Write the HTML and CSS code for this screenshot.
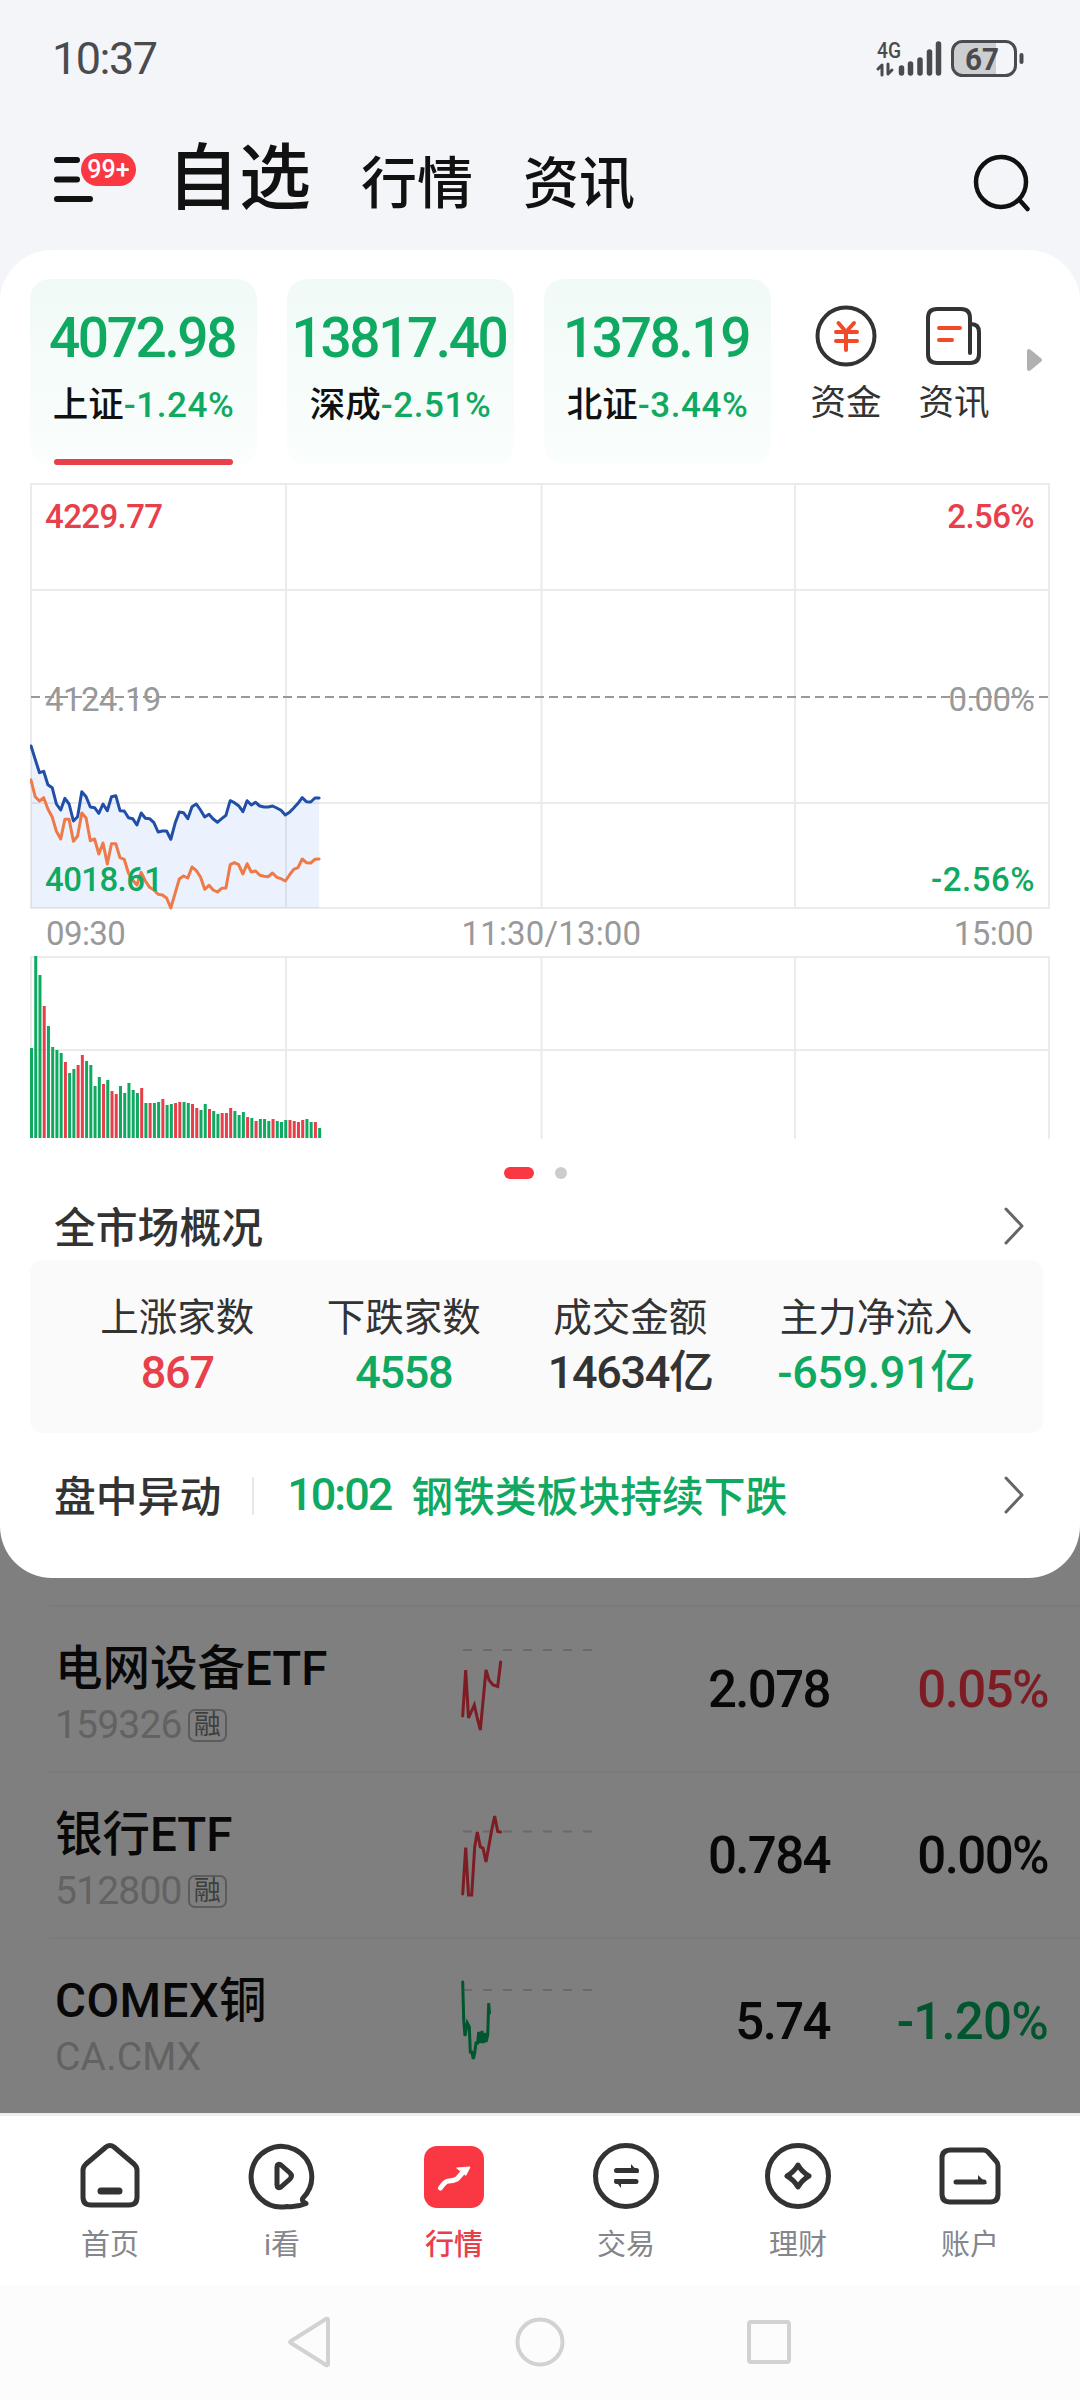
FILE: index.html
```html
<!DOCTYPE html>
<html lang="zh-CN">
<head>
  <meta charset="UTF-8">
  <meta name="viewport" content="width=device-width, initial-scale=1.0">
  <title>自选</title>
  <link rel="stylesheet" href="styles.css">
</head>
<body>

  <div class="status-bar">
    <span class="clock">10:37</span>
    <svg class="status-icons" width="150" height="50" viewBox="875 32 150 50">
      <text class="net-text" x="877" y="56" textLength="24" lengthAdjust="spacingAndGlyphs">4G</text>
      <path class="net-arrows" d="M878 67l4-4v10M892 68l-4 4V62"/>
      <path class="signal" d="M901.500 66v5M910.500 62v9M920 58v13M929.500 50v21M938.500 42v29"/>
      <path class="battery-fill" d="M962 41h34v31h-34q-8 0-8-8V49q0-8 8-8z"/>
      <rect class="battery" x="952.500" y="39.500" width="63" height="34" rx="10"/>
      <path class="battery-tip" d="M1021.500 53v7"/>
      <text class="battery-text" x="965" y="68" textLength="34" lengthAdjust="spacingAndGlyphs">67</text>
    </svg>
  </div>

  <div class="header">
    <div class="menu">
      <svg width="42" height="50" viewBox="0 0 42 50">
        <path d="M4 6h20M4 25.500h20M4 45h33"/>
      </svg>
      <span class="badge">99+</span>
    </div>
    <div class="tabs">
      <span class="tab active">自选</span>
      <span class="tab">行情</span>
      <span class="tab">资讯</span>
    </div>
    <svg class="search" width="60" height="60" viewBox="0 0 60 60">
      <circle cx="30" cy="30" r="25"/>
      <path d="M48.500 48l8 9"/>
    </svg>
  </div>

  <div class="panel-wrap">
    <div class="panel">
      <div class="index-row">
        <div class="index-card selected">
          <div class="index-value">4072.98</div>
          <div class="index-name">上证<span>-1.24%</span></div>
        </div>
        <div class="index-card">
          <div class="index-value">13817.40</div>
          <div class="index-name">深成<span>-2.51%</span></div>
        </div>
        <div class="index-card">
          <div class="index-value">1378.19</div>
          <div class="index-name">北证<span>-3.44%</span></div>
        </div>
        <div class="shortcut">
          <svg width="64" height="64" viewBox="0 0 64 64">
            <circle cx="32" cy="32" r="28.500"/>
            <path class="accent" d="M24.500 19l7.500 9 8-9M22 28h21M22 37h21M32 29v17"/>
          </svg>
          <span>资金</span>
        </div>
        <div class="shortcut">
          <svg width="64" height="64" viewBox="0 0 64 64">
            <path d="M48 49V14q0-9-9-9H15q-9 0-9 9v36q0 9 9 9h33q9 0 9-9V28q0-8-8-8"/>
            <path class="accent" d="M17 24h21M17 36h13"/>
          </svg>
          <span>资讯</span>
        </div>
        <svg class="more" width="20" height="28" viewBox="0 0 20 28">
          <path d="M4 5v18l11-9z"/>
        </svg>
      </div>

      <svg class="chart" width="1020" height="662" viewBox="30 480 1020 662">
        <path class="grid" d="M31 484H1050M31 590H1050M31 803H1050M31 908H1050M31 957H1050M31 1050H1050"/>
        <path class="grid" d="M31 484V908M286 484V908M541.500 484V908M795 484V908M1049 484V908"/>
        <path class="grid" d="M31 957V1138M286 957V1138M541.500 957V1138M795 957V1138M1049 957V1138"/>
        <path class="base-line" d="M31 697H1050"/>
        <g transform="translate(31 690)">
          <polygon id="area" class="area"/>
          <polyline id="priceLine" class="line price"/>
          <polyline id="avgLine" class="line avg"/>
        </g>
        <g id="volume"></g>
        <text class="red" x="45" y="528">4229.77</text>
        <text x="45" y="711">4124.19</text>
        <text class="green" x="45" y="891">4018.61</text>
        <text class="red end" x="1034" y="528">2.56%</text>
        <text class="end" x="1034" y="711">0.00%</text>
        <text class="green end" x="1034" y="891" textLength="103">-2.56%</text>
        <text x="46" y="945">09:30</text>
        <text class="mid" x="551" y="945" textLength="179">11:30/13:00</text>
        <text class="end" x="1033" y="945">15:00</text>
      </svg>

      <div class="pager"><i class="on"></i><i></i></div>

      <div class="line-row overview">
        <span>全市场概况</span>
        <svg class="chevron" width="24" height="40" viewBox="0 0 24 40"><path d="M4 3l16 17L4 37"/></svg>
      </div>

      <div class="stats">
        <div class="stat"><span>上涨家数</span><b class="red">867</b></div>
        <div class="stat"><span>下跌家数</span><b class="green">4558</b></div>
        <div class="stat"><span>成交金额</span><b>14634亿</b></div>
        <div class="stat"><span>主力净流入</span><b class="green wide">-659.91亿</b></div>
      </div>

      <div class="line-row news">
        <span>盘中异动</span>
        <i class="divider"></i>
        <span class="news-time">10:02</span>
        <span class="green">钢铁类板块持续下跌</span>
        <svg class="chevron" width="24" height="40" viewBox="0 0 24 40"><path d="M4 3l16 17L4 37"/></svg>
      </div>
    </div>
  </div>

  <div class="stock-list">
    <div class="stock">
      <div class="stock-name">
        <div class="name">电网设备ETF</div>
        <div class="code">159326<span class="tag">融</span></div>
      </div>
      <svg class="spark" width="140" height="100" viewBox="458 1639 140 100">
        <path class="dash" d="M463 1650H592"/>
        <polyline class="up" points="462.700,1716 465.700,1670 468.500,1718 474.300,1705 477,1717 480.300,1730 486,1670 489,1680 493,1685 497.700,1686.500 500.700,1662"/>
      </svg>
      <span class="price-col">2.078</span>
      <span class="change up">0.05%</span>
    </div>
    <div class="stock">
      <div class="stock-name">
        <div class="name">银行ETF</div>
        <div class="code">512800<span class="tag">融</span></div>
      </div>
      <svg class="spark" width="140" height="100" viewBox="458 1805 140 100">
        <path class="dash" d="M463 1831.500H592"/>
        <polyline class="up" points="462.700,1894 465.700,1847.500 468.500,1895 471.700,1895 474.700,1847 477.300,1832 480.300,1847 483,1848 486,1862 491.700,1830 494.700,1816 497.700,1831.500 500.500,1832"/>
      </svg>
      <span class="price-col">0.784</span>
      <span class="change">0.00%</span>
    </div>
    <div class="stock">
      <div class="stock-name">
        <div class="name latin">COMEX铜</div>
        <div class="code latin">CA.CMX</div>
      </div>
      <svg class="spark" width="140" height="100" viewBox="458 1971 140 100">
        <path class="dash" d="M463 1990H592"/>
        <polyline class="down" points="462.700,1982 463.700,2020 465,2036 467.300,2023 469.300,2027 470.300,2052 471.700,2052 473.300,2059 474.700,2053 476,2043 477.700,2043 478.700,2032 480,2043 482,2031 483.300,2043 485.500,2033 486,2042 487.700,2035 488.700,2003 489.500,2013"/>
      </svg>
      <span class="price-col">5.74</span>
      <span class="change down">-1.20%</span>
    </div>
  </div>

  <div class="tab-bar">
    <div class="tab-item">
      <svg width="72" height="72" viewBox="0 0 72 72">
        <path d="M9 30q0-3 3-6L32 7q4-3 8 0l20 17q3 3 3 6v27q0 8-8 8H17q-8 0-8-8z"/>
        <path class="thick" d="M27 51h18"/>
      </svg>
      <span>首页</span>
    </div>
    <div class="tab-item">
      <svg width="72" height="72" viewBox="0 0 72 72">
        <path d="M57 58A30.300 30.300 0 1 0 41 66.500Q51 67.500 60 63.500Q55 61 57 58z"/>
        <path d="M31 27v18q0 4 4 2l9-8q3-3 0-6l-9-8q-4-2-4 2z"/>
      </svg>
      <span>i看</span>
    </div>
    <div class="tab-item active">
      <svg width="72" height="72" viewBox="0 0 72 72">
        <rect x="6" y="6" width="60" height="62" rx="13"/>
        <path class="trend" d="M22.500 48Q27 41 31 41T39 39L46 31"/>
        <path class="trend-head" d="M39 28l13-1-4 8z"/>
      </svg>
      <span>行情</span>
    </div>
    <div class="tab-item">
      <svg width="72" height="72" viewBox="0 0 72 72">
        <circle cx="36" cy="36" r="30.500"/>
        <path d="M26.500 30.500h20M46 41.500H26.500"/>
        <path class="solid" d="M41 24l8 9h-8zM31 48l-7-9h7z"/>
      </svg>
      <span>交易</span>
    </div>
    <div class="tab-item">
      <svg width="72" height="72" viewBox="0 0 72 72">
        <circle cx="36" cy="36" r="30.500"/>
        <path d="M36 25q4 7 11 11q-7 4-11 11q-4-7-11-11q7-4 11-11z"/>
      </svg>
      <span>理财</span>
    </div>
    <div class="tab-item">
      <svg width="72" height="72" viewBox="0 0 72 72">
        <path d="M17 10h32q3 0 5 2l8 9q2 2 2 5v28q0 8-8 8H16q-8 0-8-8V18q0-8 9-8z"/>
        <path d="M22 42h28"/>
        <path class="solid" d="M44 35l9 9h-9z"/>
      </svg>
      <span>账户</span>
    </div>
  </div>

  <div class="system-nav">
    <svg width="56" height="56" viewBox="0 0 56 56"><path d="M45 6v44q0 2-2 1L8 29q-2-1 0-2L43 5q2-1 2 1z"/></svg>
    <svg width="56" height="56" viewBox="0 0 56 56"><circle cx="28" cy="28" r="22.500"/></svg>
    <svg width="56" height="56" viewBox="0 0 56 56"><rect x="8" y="8" width="40" height="40" rx="2"/></svg>
  </div>

  <script>
    // One sample per minute, 240 minutes in a trading day
    const step = 1017 / 240;

    // y positions below the base line, three units to a pixel
    const price = [
      168, 208, 248, 244, 284, 293, 342, 360, 325, 342, 393, 380, 305, 320, 351, 353, 370, 342, 362, 320,
      317, 362, 363, 383, 386, 405, 369, 385, 386, 398, 426, 423, 423, 448, 400, 366, 368, 386, 350, 342,
      360, 381, 373, 387, 397, 386, 376, 332, 338, 347, 365, 332, 345, 337, 348, 351, 351, 348, 354, 361,
      375, 367, 354, 340, 323, 335, 336, 324, 324
    ];
    const avg = [
      270, 320, 333, 323, 357, 381, 424, 447, 388, 388, 454, 438, 369, 384, 452, 447, 492, 459, 522, 461,
      461, 503, 508, 550, 570, 585, 547, 573, 592, 600, 613, 615, 624, 654, 610, 567, 558, 564, 531, 542,
      561, 598, 586, 600, 606, 595, 594, 524, 518, 524, 552, 521, 546, 543, 556, 559, 560, 549, 562, 566,
      573, 555, 538, 533, 507, 518, 519, 508, 507
    ];
    const volume = [
      90, 182, 163, 132, 112, 91, 88, 85, 76, 65, 69, 73, 83, 77, 73, 52, 61, 54, 58, 47,
      44, 52, 45, 55, 48, 45, 50, 35, 35, 35, 36, 39, 33, 34, 35, 36, 36, 35, 34, 30,
      28, 34, 29, 27, 24, 25, 25, 30, 27, 23, 26, 21, 20, 17, 19, 19, 17, 19, 17, 16,
      18, 18, 17, 16, 18, 19, 16, 16, 10
    ];
    // r = up minute, g = down minute
    const colors = 'gggrggggrg' + 'grrggggrgr' + 'rgggggrgrg' + 'grggrrggrr' + 'ggrggrrrgg' + 'grgrgggrgg' + 'grrrrggrg';

    function toPoints(values) {
      return values.map((v, i) => `${(i * step).toFixed(1)},${(v / 3).toFixed(1)}`).join(' ');
    }

    const lastX = (price.length - 1) * step;
    document.getElementById('priceLine').setAttribute('points', toPoints(price));
    document.getElementById('avgLine').setAttribute('points', toPoints(avg));
    document.getElementById('area').setAttribute('points', `0,218 ${toPoints(price)} ${lastX},218`);

    // Draw the volume bars
    const volumeGroup = document.getElementById('volume');
    volume.forEach((v, i) => {
      const bar = document.createElementNS('http://www.w3.org/2000/svg', 'rect');
      bar.setAttribute('x', 30 + i * step);
      bar.setAttribute('y', 1138 - v);
      bar.setAttribute('width', 3);
      bar.setAttribute('height', v);
      bar.setAttribute('class', colors[i] === 'r' ? 'red' : 'green');
      volumeGroup.appendChild(bar);
    });
  </script>

</body>
</html>
```
FILE: styles.css
```css
* {
  box-sizing: border-box;
}

body {
  width: 1080px;
  margin: 0;
  background: #f4f5f9;
  font-family: Roboto, "Noto Sans CJK SC", sans-serif;
  color: #111;
}

svg {
  display: block;
  flex: none;
  fill: none;
  stroke-linecap: round;
  stroke-linejoin: round;
}

.red {
  color: #e8404b;
  fill: #e8404b;
}

.green {
  color: #0fa962;
  fill: #0fa962;
}

/* Status bar */
.status-bar {
  display: flex;
  align-items: center;
  justify-content: space-between;
  height: 117px;
  padding: 0 55px 0 52px;
}

.clock {
  font-size: 45px;
  letter-spacing: -1.5px;
  color: #4a4b4e;
}

.net-text {
  font-size: 22px;
  font-weight: 500;
  fill: #4a4b4e;
}

.net-arrows {
  stroke: #4a4b4e;
  stroke-width: 3;
}

.signal {
  stroke: #4a4b4e;
  stroke-width: 5.5;
}

.battery {
  stroke: #4a4b4e;
  stroke-width: 3;
}

.battery-fill {
  fill: #cdced0;
}

.battery-tip {
  stroke: #4a4b4e;
  stroke-width: 4;
}

.battery-text {
  font-size: 32px;
  font-weight: 700;
  fill: #4a4b4e;
}

/* Header */
.header {
  display: flex;
  align-items: center;
  height: 133px;
  padding: 0 49px 10px 53px;
}

.menu {
  position: relative;
  width: 114px;
}

.menu svg {
  stroke: #111;
  stroke-width: 6;
}

.badge {
  position: absolute;
  top: -1px;
  left: 28px;
  width: 55px;
  height: 33px;
  border-radius: 17px;
  background: #fa3843;
  color: #fff;
  font-size: 25px;
  font-weight: 500;
  line-height: 33px;
  text-align: center;
}

.tabs {
  display: flex;
  align-items: baseline;
  gap: 50px;
  flex: 1;
  margin-top: 5px;
}

.tab {
  font-size: 56px;
  font-weight: 500;
  line-height: 72px;
}

.tab.active {
  font-size: 72px;
}

.search {
  margin-top: 7px;
  stroke: #111;
  stroke-width: 4.5;
}

/* White panel */
.panel-wrap {
  height: 1328px;
  background: linear-gradient(#f4f5f9 50%, #7f7f7f 50%);
}

.panel {
  height: 1328px;
  padding: 29px 30px 0;
  border-radius: 52px;
  background: #fff;
}

.index-row {
  display: flex;
  height: 186px;
}

.index-card {
  position: relative;
  width: 227px;
  margin-right: 30px;
  padding-top: 26px;
  border-radius: 20px;
  background: linear-gradient(#f1faf7, #fafefc);
  text-align: center;
  white-space: nowrap;
}

.index-card.selected::after {
  content: "";
  position: absolute;
  left: 24px;
  bottom: 0;
  width: 179px;
  height: 6px;
  border-radius: 3px;
  background: #e8404b;
}

.index-value {
  height: 65px;
  margin-left: -3px;
  font-size: 55px;
  font-weight: 500;
  line-height: 66px;
  letter-spacing: -2.4px;
  color: #0fa962;
}

.index-name {
  font-size: 35.5px;
  font-weight: 500;
  line-height: 71px;
}

.index-name span {
  font-size: 35px;
  letter-spacing: 0.6px;
  color: #0fa962;
}

.shortcut {
  display: flex;
  flex-direction: column;
  align-items: center;
  width: 108px;
  padding-top: 25px;
  font-size: 35.5px;
  line-height: 70px;
  color: #333;
}

.shortcut svg {
  stroke: #333;
  stroke-width: 4;
}

.shortcut .accent {
  stroke: #f04a28;
}

.index-card + .shortcut {
  margin-left: -9px;
}

.more {
  margin: 67px 0 0 17px;
  fill: #b0b0b0;
  stroke: #b0b0b0;
  stroke-width: 4;
}

/* Chart */
.chart {
  margin-top: 15px;
}

.chart text {
  font-size: 33px;
  letter-spacing: -0.6px;
  fill: #999;
}

.chart text.red {
  font-weight: 500;
  fill: #e8404b;
}

.chart text.green {
  font-weight: 500;
  fill: #0fa962;
}

.chart .end {
  text-anchor: end;
}

.chart .mid {
  text-anchor: middle;
}

.grid {
  stroke: #ebebeb;
  stroke-width: 2;
}

.base-line {
  stroke: #999;
  stroke-width: 2;
  stroke-linecap: butt;
  stroke-dasharray: 9 5;
}

.area {
  fill: rgba(66, 124, 235, 0.1);
}

.line {
  stroke-width: 3;
}

.line.price {
  stroke: #214fa8;
}

.line.avg {
  stroke: #ef7947;
}

.pager {
  display: flex;
  gap: 21px;
  margin: 25px 0 0 474px;
}

.pager i {
  width: 12px;
  height: 12px;
  border-radius: 6px;
  background: #ccc;
}

.pager .on {
  width: 30px;
  background: #fa3843;
}

.line-row {
  display: flex;
  align-items: center;
  padding: 0 14px 0 24px;
  font-size: 41.8px;
  font-weight: 500;
  color: #333;
}

.overview {
  height: 60px;
  margin: 16px 0 5px;
}

.chevron {
  margin-left: auto;
  margin-right: 10px;
  stroke: #666;
  stroke-width: 3;
}

.overview .chevron {
  margin-top: 2px;
}

.stats {
  display: grid;
  grid-template-columns: repeat(3, 226.5px) 265px;
  height: 173px;
  padding: 28px 0 0 34px;
  width: 1013px;
  border-radius: 12px;
  background: #fafafa;
}

.stat {
  display: flex;
  flex-direction: column;
  align-items: center;
  color: #333;
  font-size: 38.5px;
  line-height: 60px;
}

.stat b {
  font-size: 45px;
  font-weight: 500;
  line-height: 50px;
  letter-spacing: -1.3px;
}

.stat .wide {
  letter-spacing: -0.4px;
}

.stat .red {
  color: #e8404b;
}

.stat .green {
  color: #0fa962;
}

.news {
  height: 60px;
  margin-top: 31px;
}

.news .chevron {
  margin-top: 2px;
}

.divider {
  width: 2px;
  height: 38px;
  margin: 3px 33px 0 31px;
  background: #e8e8e8;
}

.news-time {
  width: 124px;
  font-size: 45px;
  letter-spacing: -2px;
  color: #0fa962;
}

/* Dimmed stock list */
.stock-list {
  height: 535px;
  padding-top: 27px;
  background: #7f7f7f;
}

.stock {
  display: flex;
  height: 166px;
  margin-left: 49px;
  padding: 32px 32px 0 6px;
  border-top: 2px solid #7a7a7a;
  color: #080808;
}

.stock-name {
  width: 403px;
}

.name {
  font-size: 47.5px;
  font-weight: 500;
  line-height: 60px;
}

.name.latin {
  letter-spacing: 0.4px;
}

.code {
  display: flex;
  align-items: center;
  margin-top: -2px;
  font-size: 39px;
  line-height: 56px;
  letter-spacing: -0.8px;
  color: #626262;
}

.code.latin {
  letter-spacing: 0.2px;
}

.tag {
  width: 39px;
  height: 33px;
  margin-left: 6px;
  border: 2px solid #5c5c5c;
  border-radius: 7px;
  font-size: 27px;
  line-height: 29px;
  letter-spacing: 0;
  text-align: center;
  color: #3e3e3e;
}

.spark .dash {
  stroke: #6a6a6a;
  stroke-width: 2;
  stroke-linecap: butt;
  stroke-dasharray: 9 11;
}

.spark polyline {
  stroke-width: 3;
  stroke-linejoin: miter;
}

.spark .up {
  stroke: #7e1c24;
}

.spark .down {
  stroke: #02562f;
}

.price-col,
.change {
  font-size: 51px;
  font-weight: 500;
  line-height: 102px;
  letter-spacing: -1.6px;
  text-align: right;
}

.price-col {
  width: 232px;
}

.change {
  width: 218px;
}

.change.up {
  color: #7e1c24;
}

.change.down {
  letter-spacing: -0.8px;
  color: #02562f;
}

/* Bottom tab bar */
.tab-bar {
  display: flex;
  height: 172px;
  padding: 24px 24px 0;
  border-top: 3px solid #ededed;
  background: #fff;
}

.tab-item {
  display: flex;
  flex-direction: column;
  align-items: center;
  width: 172px;
  font-size: 29px;
  line-height: 66px;
  color: #84868c;
}

.tab-item svg {
  stroke: #333;
  stroke-width: 5;
}

.tab-item .thick {
  stroke-width: 7;
}

.tab-item .solid {
  fill: #333;
  stroke: none;
}

.tab-item.active {
  font-weight: 500;
  color: #e8404b;
}

.tab-item.active rect {
  fill: #fa3843;
  stroke: none;
}

.tab-item .trend {
  stroke: #fff;
}

.tab-item .trend-head {
  fill: #fff;
  stroke: #fff;
  stroke-width: 1;
}

.system-nav {
  display: flex;
  justify-content: center;
  gap: 173px;
  height: 115px;
  padding-top: 29px;
  background: #fcfcfc;
}

.system-nav svg {
  stroke: #d2d2d2;
  stroke-width: 4;
}
```
